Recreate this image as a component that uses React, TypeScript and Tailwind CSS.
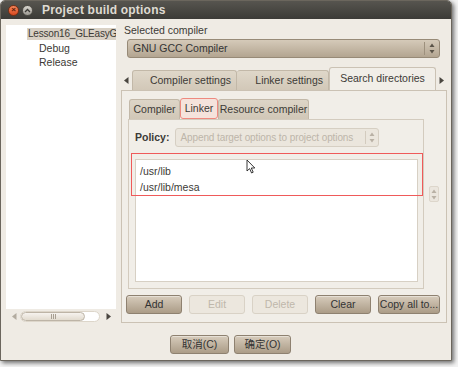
import React from 'react';

const font = { fontFamily: '"Liberation Sans", "Noto Sans CJK SC", sans-serif' };

const UpDown: React.FC<{ dim?: boolean }> = ({ dim }) => (
  <svg width="6" height="11" viewBox="0 0 6 11">
    <path d="M3 0.5 L5.5 4 L0.5 4 Z" fill={dim ? '#b9b1a5' : '#5a5348'} />
    <path d="M3 10.5 L5.5 7 L0.5 7 Z" fill={dim ? '#b9b1a5' : '#5a5348'} />
  </svg>
);

const Tri: React.FC<{ dir: 'l' | 'r'; color?: string }> = ({ dir, color = '#4a4640' }) => (
  <svg width="5" height="7" viewBox="0 0 5 7">
    <path d={dir === 'l' ? 'M4.5 0 L4.5 7 L0 3.5 Z' : 'M0.5 0 L0.5 7 L5 3.5 Z'} fill={color} />
  </svg>
);

const Btn: React.FC<{ label: string; w: string; disabled?: boolean }> = ({ label, w, disabled }) => (
  <div
    className={`${w} h-[19px] flex items-center justify-center whitespace-nowrap rounded-[3px] border text-[10.5px] ${
      disabled
        ? 'border-[#d9d2c6] bg-[#ece7de] text-[#bfb7ab]'
        : 'border-[#8e8170] bg-gradient-to-b from-[#d7ccbc] to-[#ab9c87] text-[#333] shadow-[inset_0_1px_0_rgba(255,255,255,0.4)]'
    }`}
  >
    {label}
  </div>
);

const App: React.FC = () => {
  return (
    <div className="w-[458px] h-[367px] bg-[#f3f3f3] overflow-hidden" style={font}>
      <div className="w-[452px] h-[361px] flex flex-col bg-[#efebe4] rounded-t-[5px] border border-[#6b665d] shadow-[2px_2px_4px_rgba(0,0,0,0.55)] overflow-hidden text-[#3c3a36] text-[10.5px] whitespace-nowrap">
        {/* title bar */}
        <div className="h-[18px] shrink-0 flex items-center bg-gradient-to-b from-[#57554f] to-[#3c3b37]">
          <div className="ml-[7px] w-[11px] h-[11px] rounded-full bg-gradient-to-b from-[#f5865a] to-[#d8491f] border border-[#7a2f14] flex items-center justify-center text-[8px] leading-none text-[#5a1c08] font-bold">
            ×
          </div>
          <div className="ml-[3px] w-[11px] h-[11px] rounded-full bg-gradient-to-b from-[#d9d6cf] to-[#9d9a93] border border-[#55524c] flex items-center justify-center">
            <svg width="7" height="5" viewBox="0 0 7 5">
              <path d="M1 4 L3.5 1.5 L6 4" stroke="#3c3b37" strokeWidth="1.3" fill="none" />
            </svg>
          </div>
          <div className="ml-[9px] text-[12px] font-bold text-[#dfdbd2] tracking-[0.2px]">Project build options</div>
        </div>

        {/* body */}
        <div className="flex-1 flex flex-col">
          <div className="flex pt-[4px]">
            {/* tree */}
            <div className="ml-[5px] w-[110px] flex flex-col">
              <div className="mt-[2px] h-[284px] bg-white pt-[3px] overflow-hidden">
                <div className="ml-[21px] h-[12px] bg-[#d9d1c5] pl-[1px] leading-[12px] overflow-hidden text-[10px] tracking-[-0.2px]">
                  Lesson16_GLEasyG
                </div>
                <div className="ml-[33px] h-[14px] mt-[1px] leading-[14px]">Debug</div>
                <div className="ml-[33px] h-[14px] leading-[14px]">Release</div>
              </div>
              <div className="h-[14px] flex items-center">
                <div className="ml-[6px] flex">
                  <Tri dir="l" color="#b3aca0" />
                </div>
                <div className="ml-[3px] w-[80px] h-[11px] rounded-full border border-[#ddd6ca] bg-white flex">
                  <div className="w-[64px] h-[9px] rounded-full border border-[#bdb4a6] bg-gradient-to-b from-[#f6f3ee] to-[#e2dbcf] flex items-center justify-center gap-[1px]">
                    <span className="w-px h-[5px] bg-[#a89f92]" />
                    <span className="w-px h-[5px] bg-[#a89f92]" />
                    <span className="w-px h-[5px] bg-[#a89f92]" />
                  </div>
                </div>
                <div className="ml-[6px] flex">
                  <Tri dir="r" />
                </div>
              </div>
            </div>

            {/* right side */}
            <div className="ml-[5px] w-[326px] flex flex-col">
              <div className="h-[14px] pl-[3px] leading-[14px]">Selected compiler</div>
              <div className="ml-[6px] mt-[2px] w-[313px] h-[19px] rounded-[3px] border border-[#978a77] bg-gradient-to-b from-[#d5cab9] to-[#b3a591] flex items-center text-[#333]">
                <span className="ml-[5px] flex-1">GNU GCC Compiler</span>
                <span className="w-px h-[13px] bg-[#9d907d]" />
                <span className="mx-[4px] flex">
                  <UpDown />
                </span>
              </div>

              {/* outer tabs */}
              <div className="mt-[9px] h-[23px] flex items-end">
                <div className="w-[11px] h-[20px] flex items-center justify-center">
                  <Tri dir="l" />
                </div>
                <div className="w-[105px] h-[20px] flex items-center justify-end pr-[5px] bg-gradient-to-b from-[#dfd7c9] to-[#d2c8b8] border border-b-0 border-[#c2b8a8] rounded-t-[3px]">
                  Compiler settings
                </div>
                <div className="w-[92px] h-[20px] flex items-center justify-end pr-[5px] bg-gradient-to-b from-[#dfd7c9] to-[#d2c8b8] border border-b-0 border-l-0 border-[#c2b8a8] rounded-t-[3px]">
                  Linker settings
                </div>
                <div className="w-[107px] h-[23px] flex items-center justify-center bg-[#f1eee8] border border-b-0 border-[#cbc2b4] rounded-t-[3px]">
                  Search directories
                </div>
                <div className="w-[11px] h-[20px] flex items-center justify-center">
                  <Tri dir="r" />
                </div>
              </div>

              {/* outer page */}
              <div className="h-[233px] border border-[#cbc2b4] bg-[#f1eee8] flex flex-col">
                <div className="flex">
                  {/* inner notebook */}
                  <div className="ml-[6px] w-[296px] flex flex-col">
                    <div className="mt-[7px] h-[21px] flex items-end pl-[1px]">
                      <div className="w-[51px] h-[20px] flex items-center justify-center bg-gradient-to-b from-[#ddd5c7] to-[#d1c7b7] border border-b-0 border-[#c2b8a8] rounded-t-[3px]">
                        Compiler
                      </div>
                      <div className="w-[38px] h-[21px] flex items-center justify-center bg-[#f5e3dc] border border-[#ee8a80] rounded-[3px]">
                        Linker
                      </div>
                      <div className="w-[91px] h-[20px] flex items-center justify-center bg-gradient-to-b from-[#ddd5c7] to-[#d1c7b7] border border-b-0 border-[#c2b8a8] rounded-t-[3px]">
                        Resource compiler
                      </div>
                    </div>
                    <div className="h-[170px] border border-[#d3cbbe] bg-[#f1eee8] relative">
                      <div className="mt-[8px] flex items-center">
                        <span className="ml-[6px] font-bold">Policy:</span>
                        <div className="ml-[6px] w-[204px] h-[19px] rounded-[3px] border border-[#d6cfc3] bg-[#ebe6dd] flex items-center text-[#bdb5a9]">
                          <span className="ml-[4px] flex-1 overflow-hidden text-[10px] tracking-[-0.1px]">Append target options to project options</span>
                          <span className="w-px h-[13px] bg-[#d3cbbe]" />
                          <span className="mx-[3px] flex">
                            <UpDown dim />
                          </span>
                        </div>
                      </div>
                      <div className="ml-[6px] mt-[12px] w-[283px] h-[123px] border border-[#d7d0c4] bg-white pt-[3px]">
                        <div className="ml-[4px] h-[16px] leading-[16px]">/usr/lib</div>
                        <div className="ml-[4px] h-[16px] leading-[16px]">/usr/lib/mesa</div>
                      </div>
                      {/* annotation box */}
                      <div className="absolute left-[2px] top-[33px] w-[292px] h-[43px] border-[1.5px] border-[#ef5a5a]" />
                      {/* mouse pointer */}
                      <svg className="absolute left-[117px] top-[39px]" width="10" height="15" viewBox="0 0 10 15">
                        <path d="M1 1 L1 12 L3.6 9.6 L5.6 14 L7.2 13.2 L5.3 9 L8.8 9 Z" fill="#fff" stroke="#222" strokeWidth="0.9" strokeLinejoin="round" />
                      </svg>
                    </div>
                  </div>
                  {/* spinner */}
                  <div className="ml-[5px] mt-[95px] w-[10px] h-[16px] rounded-[2px] border border-[#ddd6cb] bg-[#ebe6de] flex items-center justify-center">
                    <UpDown dim />
                  </div>
                </div>

                {/* action buttons */}
                <div className="mt-[6px] ml-[4px] flex gap-[7px]">
                  <Btn label="Add" w="w-[56px]" />
                  <Btn label="Edit" w="w-[56px]" disabled />
                  <Btn label="Delete" w="w-[56px]" disabled />
                  <Btn label="Clear" w="w-[56px]" />
                  <Btn label="Copy all to..." w="w-[62px]" />
                </div>
              </div>
            </div>
          </div>

          {/* dialog buttons */}
          <div className="mt-[12px] ml-[169px] flex gap-[5px]">
            <Btn label="取消(C)" w="w-[59px]" />
            <Btn label="确定(O)" w="w-[57px]" />
          </div>
        </div>
      </div>
    </div>
  );
};

export default App;
